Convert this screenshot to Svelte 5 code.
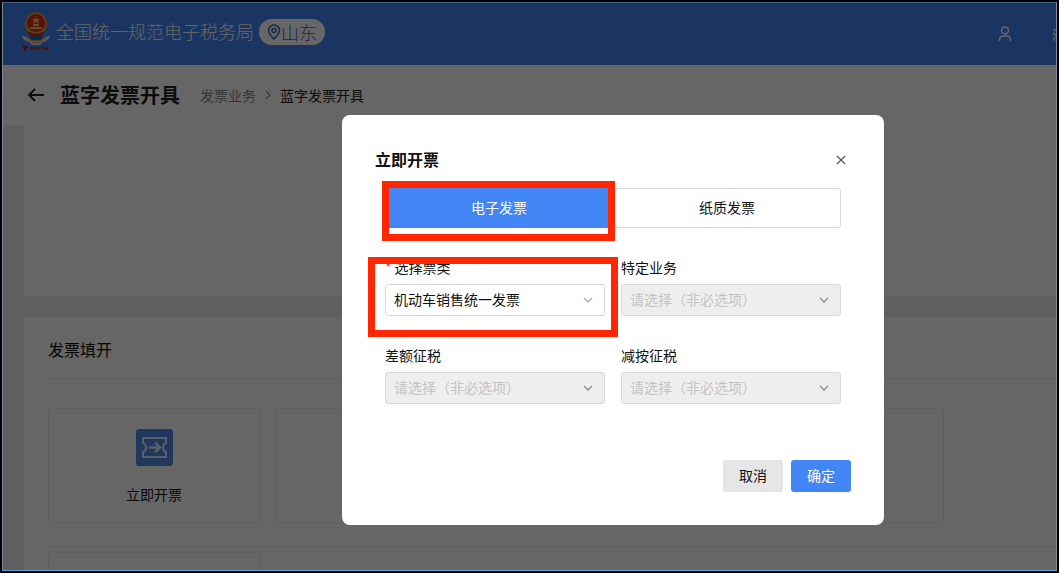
<script lang="ts">
	interface Field {
		id: string;
		label: string;
		value: string;
		required?: boolean;
		disabled?: boolean;
	}

	const placeholder = '请选择（非必选项）';

	const fields: Field[] = [
		{ id: 'kind', label: '选择票类', value: '机动车销售统一发票', required: true },
		{ id: 'business', label: '特定业务', value: placeholder, disabled: true },
		{ id: 'difference', label: '差额征税', value: placeholder, disabled: true },
		{ id: 'reduced', label: '减按征税', value: placeholder, disabled: true }
	];

	const tabs = ['电子发票', '纸质发票'];

	let open = $state(true);
	let activeTab = $state(0);

	function close() {
		open = false;
	}
</script>

<div class="window">
	<header class="topbar">
		<svg class="emblem" width="30" height="40" viewBox="0 0 30 40">
			<path d="M1 24c4 0 5 2 8 4h12c3-2 4-4 8-4-1 4-4 5-7 6l-3 3H11l-3-3c-3-1-6-2-7-6z" fill="#d8dde4" />
			<path d="M7 20l3 9h10l3-9z" fill="#2d65b0" />
			<path d="M5 25l6 4h8l6-4M11 31h8" stroke="#e5b64a" stroke-width="1.5" fill="none" />
			<ellipse cx="15" cy="12" rx="11" ry="12" fill="#dc9a35" />
			<circle cx="15" cy="11" r="9" fill="#d92a1c" />
			<path d="M15 4l1 3h3l-2 2 1 3-3-2-3 2 1-3-2-2h3z" fill="#f5c84c" />
			<path d="M9 15h12l-1 2H10zM12 12h6v2h-6z" fill="#f5c84c" />
			<path d="M6 18c5 5 13 5 18 0l-3 6H9z" fill="#d92a1c" />
			<path
				d="M2 35h5M4 34v5M9 36h4M10 35l2 3M15 35v3M17 36h3M18 35v3M22 35l2 3M25 36h3M26 35v3"
				stroke="#c3202a"
				stroke-width="2"
			/>
		</svg>
		<span class="brand">全国统一规范电子税务局</span>
		<button type="button" class="region">
			<svg width="14" height="16" viewBox="0 0 14 16" fill="none" stroke="currentColor" stroke-width="1.5">
				<path d="M7 15C4 12 1.500 9.500 1.500 6.500a5.500 5.500 0 0 1 11 0C12.500 9.500 10 12 7 15z" />
				<circle cx="7" cy="6.500" r="2" />
			</svg>
			山东
		</button>
		<button type="button" class="user" aria-label="用户">
			<svg width="14" height="16" viewBox="0 0 14 16" fill="none" stroke="currentColor" stroke-width="1.5">
				<circle cx="7" cy="4.500" r="3.500" />
				<path d="M1.500 15v-1.500a3.500 3.500 0 0 1 3.500-3.500h4a3.500 3.500 0 0 1 3.500 3.500V15" />
			</svg>
		</button>
		<span class="account">雅</span>
	</header>

	<div class="titlebar">
		<button type="button" class="back" aria-label="返回">
			<svg width="18" height="14" viewBox="0 0 18 14" fill="none" stroke="currentColor" stroke-width="2">
				<path d="M17 7H2M8 1L2 7l6 6" />
			</svg>
		</button>
		<h1>蓝字发票开具</h1>
		<nav>
			<a href="#business">发票业务</a>
			<svg width="6" height="10" viewBox="0 0 6 10" fill="none" stroke="currentColor">
				<path d="M1 1l4 4-4 4" />
			</svg>
			<span>蓝字发票开具</span>
		</nav>
	</div>

	<main>
		<section class="panel summary"></section>
		<section class="panel">
			<h2>发票填开</h2>
			<div class="cards">
				<button type="button" class="card">
					<svg width="37" height="37" viewBox="0 0 37 37" fill="none">
						<rect width="37" height="37" rx="3" fill="#5089ea" />
						<path
							d="M7 9h23v5q-3 1-3 4.500t3 4.500v5H7v-5q3-1 3-4.500T7 14z"
							stroke="#e4eefc"
							stroke-width="2"
						/>
						<path d="M12.500 18.500h11M19 13.500l5 5-5 5" stroke="#e4eefc" stroke-width="2.500" />
					</svg>
					立即开票
				</button>
				<div class="card"></div>
				<div class="card"></div>
				<div class="card"></div>
			</div>
			<div class="cards next">
				<div class="card"></div>
			</div>
		</section>
	</main>

	{#if open}
		<div class="overlay">
			<div class="dialog" role="dialog" aria-modal="true" aria-labelledby="dialog-title">
				<div class="dialog-header">
					<h2 id="dialog-title">立即开票</h2>
					<button type="button" class="close" aria-label="关闭" onclick={close}>
						<svg width="10" height="10" viewBox="0 0 10 10" stroke="currentColor" stroke-width="1.2">
							<path d="M1 1l8 8M9 1L1 9" />
						</svg>
					</button>
				</div>

				<div class="dialog-body">
					<div class="tabs">
						{#each tabs as tab, i}
							<div class="tab-cell" class:marked={i === 0}>
								<button
									type="button"
									class:active={activeTab === i}
									aria-pressed={activeTab === i}
									onclick={() => (activeTab = i)}>{tab}</button
								>
							</div>
						{/each}
					</div>

					<div class="fields">
						{#each fields as field (field.id)}
							<div class="field" class:marked={field.required}>
								<label for={field.id}>
									{#if field.required}<i>*</i>{/if}{field.label}
								</label>
								<div class="select">
									<select id={field.id} disabled={field.disabled}>
										<option>{field.value}</option>
									</select>
									<svg
										class:dark={field.disabled}
										width="10"
										height="6"
										viewBox="0 0 10 6"
										fill="none"
										stroke="currentColor"
										stroke-width="1.5"
									>
										<path d="M1 1l4 4 4-4" />
									</svg>
								</div>
							</div>
						{/each}
					</div>
				</div>

				<div class="dialog-footer">
					<button type="button" onclick={close}>取消</button>
					<button type="button" class="primary" onclick={close}>确定</button>
				</div>
			</div>
		</div>
	{/if}
</div>

<style>
	:global(body) {
		margin: 0;
	}

	.window {
		position: relative;
		display: flex;
		flex-direction: column;
		box-sizing: border-box;
		height: 100vh;
		overflow: hidden;
		border: 2px solid #000;
		background: #eee;
		color: #111;
		font-family: 'Noto Sans CJK SC', sans-serif;
		font-size: 14px;
		line-height: 20px;
	}

	/* thin light edge inside the black frame */
	.window::after {
		content: '';
		position: absolute;
		inset: 0;
		border: 1px solid #7d8a9b;
		border-top-color: #41658f;
		border-bottom-color: #62a0dc;
		pointer-events: none;
	}

	button {
		padding: 0;
		border: none;
		background: none;
		color: inherit;
		font: inherit;
		cursor: pointer;
	}

	h1,
	h2 {
		margin: 0;
	}

	svg {
		flex: none;
	}

	.topbar {
		display: flex;
		flex: none;
		align-items: center;
		box-sizing: border-box;
		height: 63px;
		padding: 0 0 4px 19px;
		background: #4285f4;
		color: #fff;
	}

	.brand {
		margin: 0 5px;
		padding-bottom: 2px;
		font-size: 18px;
		font-weight: 300;
		white-space: nowrap;
	}

	.region {
		display: flex;
		align-items: center;
		height: 26px;
		padding: 0 8px;
		border-radius: 13px;
		background: #fff;
		color: #3a68b8;
		font-size: 18px;
		font-weight: 300;
	}

	.user {
		display: flex;
		margin-left: auto;
		padding-top: 4px;
	}

	.account {
		width: 5px;
		margin-left: 40px;
		padding-top: 4px;
		overflow: hidden;
		white-space: nowrap;
	}

	.titlebar {
		display: flex;
		flex: none;
		align-items: center;
		height: 60px;
		padding-left: 25px;
		background: #fff;
		color: #222;
	}

	.back {
		display: flex;
	}

	h1 {
		margin: 0 20px 0 15px;
		font-size: 20px;
		line-height: 28px;
	}

	nav {
		display: flex;
		align-items: center;
		gap: 9px;
	}

	nav a {
		color: #888;
		text-decoration: none;
	}

	nav svg {
		color: #555;
	}

	main {
		padding-left: 22px;
	}

	.panel {
		padding: 20px 0 0 24px;
		background: #fff;
	}

	.summary {
		box-sizing: border-box;
		height: 171px;
		margin-bottom: 21px;
	}

	.panel h2 {
		padding: 0 0 18px;
		border-bottom: 1px solid #eee;
		font-size: 16px;
		font-weight: 400;
		line-height: 24px;
	}

	.cards {
		display: flex;
		gap: 16px;
		padding: 28px 0 22px;
		border-bottom: 1px solid #eee;
	}

	.cards.next {
		padding-top: 5px;
	}

	.card {
		display: flex;
		flex-direction: column;
		align-items: center;
		gap: 18px;
		box-sizing: border-box;
		width: 212px;
		height: 116px;
		padding-top: 20px;
		border: 1px solid #eee;
		border-radius: 4px;
	}

	.overlay {
		position: absolute;
		inset: 0;
		display: flex;
		align-items: flex-start;
		justify-content: center;
		padding: 113px 0 0 167px;
		background: rgba(0, 0, 0, 0.6);
	}

	.dialog {
		box-sizing: border-box;
		width: 542px;
		padding: 32px 33px 33px;
		border-radius: 8px;
		background: #fff;
	}

	.dialog-header {
		display: flex;
		align-items: center;
		justify-content: space-between;
		height: 26px;
	}

	.dialog-header h2 {
		padding-bottom: 2px;
		font-size: 16px;
	}

	.close {
		display: flex;
		padding: 5px;
		color: #555;
	}

	.dialog-body {
		padding: 15px 10px 0;
	}

	.tabs,
	.fields {
		display: grid;
		grid-template-columns: 1fr 1fr;
	}

	.tab-cell,
	.field {
		position: relative;
	}

	.tab-cell button {
		box-sizing: border-box;
		width: 100%;
		height: 40px;
		padding-bottom: 2px;
		border: 1px solid #d9d9d9;
		border-radius: 0 3px 3px 0;
	}

	.tab-cell button.active {
		border-color: #4285f4;
		background: #4285f4;
		color: #fff;
	}

	/* red frames round the controls to use */
	.marked::after {
		content: '';
		position: absolute;
		z-index: 1;
		border: 7px solid #ff2600;
		pointer-events: none;
	}

	.tab-cell.marked::after {
		inset: -7px -2px -13px -3px;
	}

	.field.marked::after {
		inset: 0 -13px -21px -17px;
	}

	.fields {
		gap: 29px 16px;
		margin-top: 29px;
	}

	.field label {
		display: block;
		margin-bottom: 7px;
	}

	.field i {
		margin-right: 3px;
		color: #e5393f;
		font-style: normal;
	}

	.select {
		position: relative;
	}

	select {
		display: block;
		box-sizing: border-box;
		width: 100%;
		height: 32px;
		padding: 0 28px 2px 8px;
		border: 1px solid #d9d9d9;
		border-radius: 3px;
		appearance: none;
		background: #fff;
		color: #111;
		font: inherit;
	}

	select:disabled {
		background: #eee;
		color: #c4c4c4;
		opacity: 1;
	}

	.select svg {
		position: absolute;
		top: 13px;
		right: 12px;
		color: #b0b0b0;
		pointer-events: none;
	}

	.select svg.dark {
		color: #909090;
	}

	.dialog-footer {
		display: flex;
		justify-content: flex-end;
		gap: 8px;
		margin-top: 56px;
	}

	.dialog-footer button {
		width: 60px;
		height: 32px;
		padding-bottom: 2px;
		border-radius: 3px;
		background: #e6e6e6;
	}

	.dialog-footer .primary {
		background: #4285f4;
		color: #fff;
	}
</style>
